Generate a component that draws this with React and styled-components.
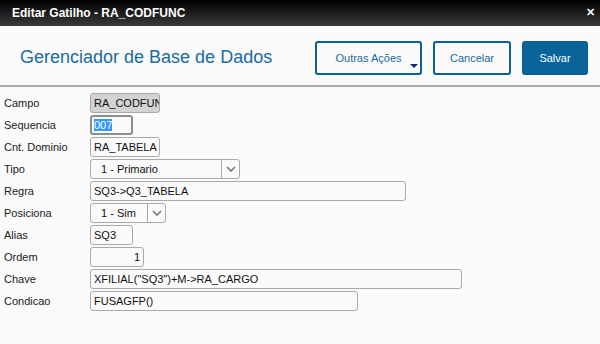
import React from 'react';
import styled, { createGlobalStyle } from 'styled-components';

const GlobalStyle = createGlobalStyle`
  html, body {
    margin: 0;
    padding: 0;
    background: #fafafa;
    font-family: "Liberation Sans", Arial, sans-serif;
  }
`;

const Dialog = styled.div`
  width: 600px;
  height: 344px;
  background: #fafafa;
  overflow: hidden;
`;

const TitleBar = styled.div`
  height: 26px;
  display: flex;
  align-items: center;
  justify-content: space-between;
  padding: 0 5px 0 12px;
  background: linear-gradient(to bottom, #000 0%, #1c1c1c 50%, #3a3a3a 100%);
  color: #fff;
  font-weight: bold;
  font-size: 12px;
`;

const Close = styled.span`
  font-size: 11px;
  font-weight: bold;
  line-height: 1;
  color: #eef3ff;
  margin-top: -1px;
`;

const Header = styled.div`
  height: 59px;
  display: flex;
  align-items: center;
  padding: 0 12px 0 20px;
  border-bottom: 2px solid #a9a9a9;
`;

const Heading = styled.h1`
  flex: 1;
  margin: 4px 0 0 0;
  font-size: 18px;
  font-weight: normal;
  color: #1b6aa0;
`;

const Actions = styled.div`
  display: flex;
  gap: 11px;
  margin-top: 4px;
`;

const Button = styled.button`
  position: relative;
  height: 34px;
  width: ${({ w }) => w}px;
  border-radius: 3px;
  border: 2px solid #0b5f93;
  background: ${({ primary }) => (primary ? '#0a6399' : '#fafafa')};
  color: ${({ primary }) => (primary ? '#fff' : '#1b6aa0')};
  font-family: "Liberation Sans", Arial, sans-serif;
  font-size: 11px;
  padding: 0;
`;

const Caret = styled.span`
  position: absolute;
  right: 2px;
  bottom: 5px;
  width: 0;
  height: 0;
  border-left: 4px solid transparent;
  border-right: 4px solid transparent;
  border-top: 4px solid #1a237e;
`;

const Form = styled.div`
  display: grid;
  grid-template-columns: 86px 1fr;
  grid-auto-rows: 20px;
  row-gap: 2px;
  padding: 6px 0 0 4px;
  font-size: 11px;
  color: #222;
`;

const Label = styled.div`
  display: flex;
  align-items: center;
`;

const Field = styled.div`
  box-sizing: border-box;
  width: ${({ w }) => w}px;
  height: 20px;
  display: flex;
  align-items: center;
  justify-content: ${({ right }) => (right ? 'flex-end' : 'flex-start')};
  padding: 0 3px;
  border: ${({ focus }) => (focus ? '2px solid #8d8d8d' : '1px solid #a9a9a9')};
  border-radius: 3px;
  background: ${({ disabled }) => (disabled ? '#d3d3d3' : '#fafafa')};
  color: #111;
  font-size: 11px;
  white-space: nowrap;
  overflow: hidden;
`;

const Selected = styled.span`
  background: #3399ff;
  color: #fff;
  margin-left: -1px;
`;

const Select = styled.div`
  box-sizing: border-box;
  width: ${({ w }) => w}px;
  height: 20px;
  display: flex;
  border: 1px solid #a9a9a9;
  border-radius: 3px;
  background: #fafafa;
  font-size: 11px;
`;

const SelectText = styled.div`
  flex: 1;
  display: flex;
  align-items: center;
  padding-left: 10px;
  color: #111;
`;

const SelectArrow = styled.div`
  width: 17px;
  border-left: 1px solid #a9a9a9;
  display: flex;
  align-items: center;
  justify-content: center;
`;

const Chevron = () => (
  <svg width="10" height="6" viewBox="0 0 10 6">
    <path d="M1 1 L5 5 L9 1" fill="none" stroke="#777" strokeWidth="1.6" />
  </svg>
);

const rows = [
  { label: 'Campo', el: <Field w={70} disabled>RA_CODFUNC</Field> },
  { label: 'Sequencia', el: <Field w={43} focus><Selected>007</Selected></Field> },
  { label: 'Cnt. Dominio', el: <Field w={70}>RA_TABELA</Field> },
  {
    label: 'Tipo',
    el: (
      <Select w={150}>
        <SelectText>1 - Primario</SelectText>
        <SelectArrow><Chevron /></SelectArrow>
      </Select>
    ),
  },
  { label: 'Regra', el: <Field w={316}>SQ3-&gt;Q3_TABELA</Field> },
  {
    label: 'Posiciona',
    el: (
      <Select w={76}>
        <SelectText>1 - Sim</SelectText>
        <SelectArrow><Chevron /></SelectArrow>
      </Select>
    ),
  },
  { label: 'Alias', el: <Field w={43}>SQ3</Field> },
  { label: 'Ordem', el: <Field w={54} right>1</Field> },
  { label: 'Chave', el: <Field w={372}>XFILIAL("SQ3")+M-&gt;RA_CARGO</Field> },
  { label: 'Condicao', el: <Field w={268}>FUSAGFP()</Field> },
];

export default function App() {
  return (
    <Dialog>
      <GlobalStyle />
      <TitleBar>
        <span>Editar Gatilho - RA_CODFUNC</span>
        <Close>✕</Close>
      </TitleBar>
      <Header>
        <Heading>Gerenciador de Base de Dados</Heading>
        <Actions>
          <Button w={107}>
            Outras Ações
            <Caret />
          </Button>
          <Button w={78}>Cancelar</Button>
          <Button w={66} primary>Salvar</Button>
        </Actions>
      </Header>
      <Form>
        {rows.map(r => (
          <React.Fragment key={r.label}>
            <Label>{r.label}</Label>
            <div>{r.el}</div>
          </React.Fragment>
        ))}
      </Form>
    </Dialog>
  );
}
